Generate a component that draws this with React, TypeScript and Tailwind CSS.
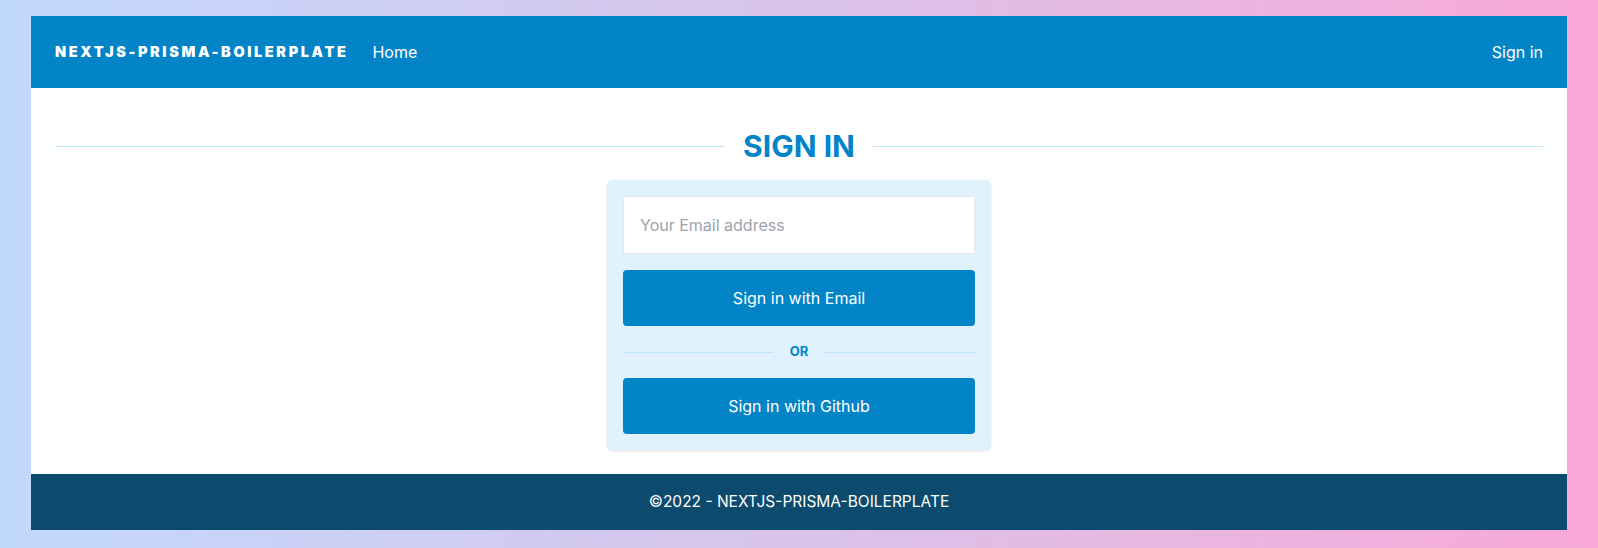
export default function App() {
  return (
    <div
      className="min-h-screen bg-gradient-to-r from-[#c1d9fd] via-[#d9c3ea] to-[#f8a8d8] px-[31px] pt-4 pb-[18px]"
      style={{ fontFamily: "Inter, 'Noto Sans', sans-serif" }}
    >
      <div className="flex flex-col bg-white">
        <header className="flex h-[72px] items-center justify-between bg-[#0284c7] px-6 text-white">
          <div className="flex items-center">
            <span className="text-[14.5px] font-black tracking-[0.18em]">
              NEXTJS-PRISMA-BOILERPLATE
            </span>
            <a className="ml-6 text-base">Home</a>
          </div>
          <a className="text-base">Sign in</a>
        </header>

        <main className="px-6 pt-10 pb-6">
          <div className="flex items-center gap-[18px]">
            <div className="h-px flex-1 bg-[#bae6fd]" />
            <h1 className="text-3xl leading-9 font-bold text-[#0284c7]">SIGN IN</h1>
            <div className="h-px flex-1 bg-[#bae6fd]" />
          </div>

          <div className="mx-auto mt-4 w-[384px] rounded-md bg-[#e0f2fe] p-4 shadow-sm">
            <input
              type="email"
              placeholder="Your Email address"
              className="block h-[58px] w-full border border-[#e2e8f0] bg-white px-4 text-base text-gray-700 placeholder:text-[#9ca3af] focus:outline-none"
            />
            <button className="mt-4 flex h-14 w-full items-center justify-center rounded bg-[#0284c7] text-base text-white">
              Sign in with Email
            </button>
            <div className="my-4 flex h-5 items-center gap-4">
              <div className="h-px flex-1 bg-[#bae6fd]" />
              <span className="text-[13px] font-bold text-[#0284c7]">OR</span>
              <div className="h-px flex-1 bg-[#bae6fd]" />
            </div>
            <button className="flex h-14 w-full items-center justify-center rounded bg-[#0284c7] text-base text-white">
              Sign in with Github
            </button>
          </div>
        </main>

        <footer className="flex h-14 items-center justify-center bg-[#0c4a6e] text-[15.5px] text-white">
          ©2022 - NEXTJS-PRISMA-BOILERPLATE
        </footer>
      </div>
    </div>
  );
}
